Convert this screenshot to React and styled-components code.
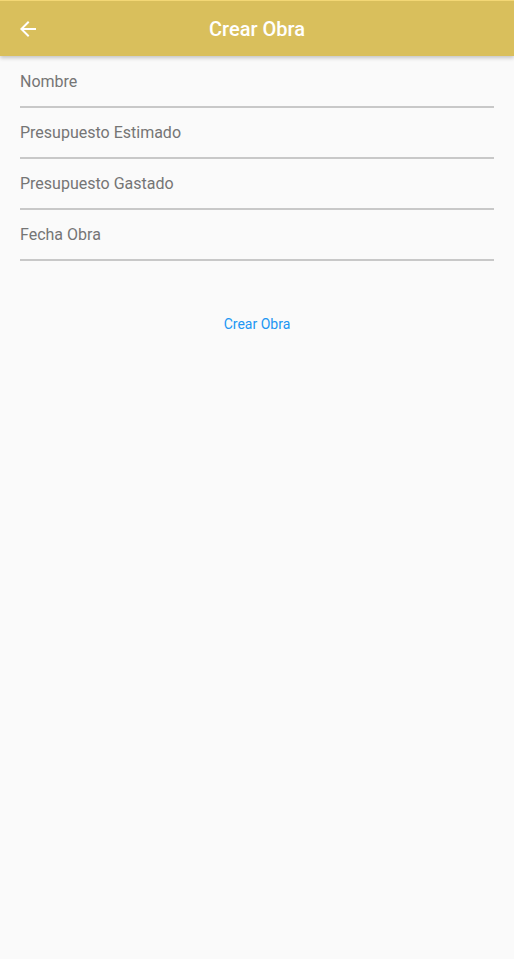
import React from "react";
import styled, { createGlobalStyle } from "styled-components";

const GlobalStyle = createGlobalStyle`
  html, body {
    margin: 0;
    padding: 0;
    background: #fafafa;
    font-family: Roboto, "Liberation Sans", sans-serif;
  }
`;

const Page = styled.div`
  min-height: 959px;
  background: #fafafa;
`;

const AppBar = styled.header`
  height: 56px;
  display: flex;
  align-items: center;
  background: #d9bf5c;
  border-top: 1px solid #f3d775;
  box-sizing: border-box;
  box-shadow: 0 2px 4px rgba(0, 0, 0, 0.22);
  position: relative;
`;

const BackButton = styled.button`
  width: 56px;
  height: 56px;
  display: flex;
  align-items: center;
  justify-content: center;
  background: none;
  border: none;
  padding: 0;
  color: #fff;
`;

const Title = styled.h1`
  flex: 1;
  margin: 0 56px 0 0;
  text-align: center;
  color: #fff;
  font-size: 20px;
  font-weight: 500;
`;

const Form = styled.form`
  padding: 0 20px;
  display: flex;
  flex-direction: column;
`;

const Fields = styled.div`
  display: flex;
  flex-direction: column;
  padding-top: 1px;
`;

const Field = styled.label`
  display: flex;
  align-items: flex-end;
  height: 51px;
  border-bottom: 2px solid #c8c8c8;
  box-sizing: border-box;
  padding-bottom: 15px;
  color: #757575;
  font-size: 16px;
`;

const SubmitButton = styled.button`
  align-self: center;
  margin-top: 55px;
  background: none;
  border: none;
  color: #2196f3;
  font-family: Roboto, "Liberation Sans", sans-serif;
  font-size: 14px;
  padding: 0;
`;

const fields = ["Nombre", "Presupuesto Estimado", "Presupuesto Gastado", "Fecha Obra"];

export default function App() {
  return (
    <Page>
      <GlobalStyle />
      <AppBar>
        <BackButton aria-label="Back">
          <svg width="24" height="24" viewBox="0 0 24 24" fill="#fff">
            <path d="M20 11H7.83l5.59-5.59L12 4l-8 8 8 8 1.41-1.41L7.83 13H20v-2z" />
          </svg>
        </BackButton>
        <Title>Crear Obra</Title>
      </AppBar>
      <Form>
        <Fields>
          {fields.map((f) => (
            <Field key={f}>{f}</Field>
          ))}
        </Fields>
        <SubmitButton type="button">Crear Obra</SubmitButton>
      </Form>
    </Page>
  );
}
